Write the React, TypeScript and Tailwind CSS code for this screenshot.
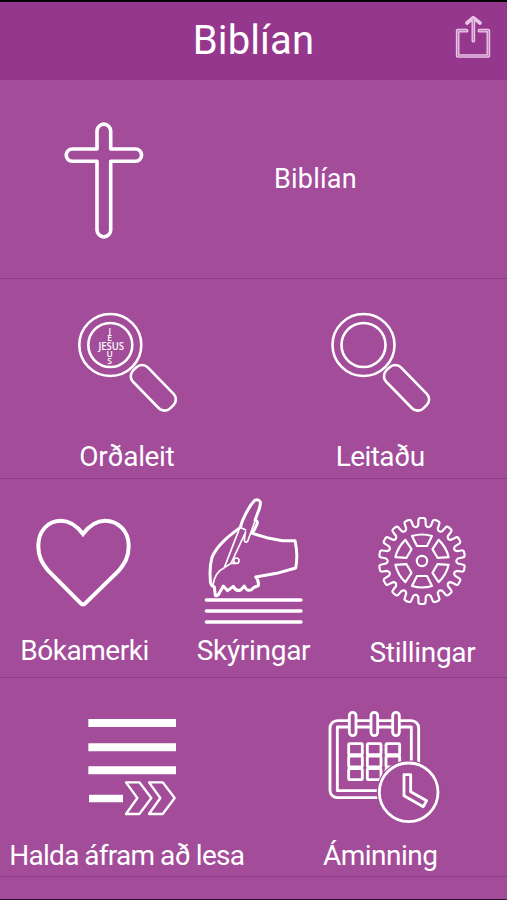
import type { ReactNode } from "react";

const BG = "#a24c9a";

const LABEL = "block h-10 text-[28px] leading-10 whitespace-pre";

type IconProps = { box: string; className: string; children: ReactNode };

function Icon({ box, className, children }: IconProps) {
  return (
    <svg viewBox={box} className={className} fill="none" stroke="#fff" strokeLinejoin="round" strokeLinecap="round">
      {children}
    </svg>
  );
}

function Magnifier() {
  return (
    <g strokeWidth="2.6">
      <circle cx="110.3" cy="345" r="31" />
      <circle cx="110.3" cy="345" r="22" />
      <rect x="126.8" y="377.5" width="53" height="20.6" rx="8" transform="rotate(45.7 153.3 387.8)" />
    </g>
  );
}

function gearPath(teeth: number) {
  const pts: string[] = [];
  const at = (r: number, deg: number) => {
    const a = (deg * Math.PI) / 180;
    return `${(171 + r * Math.sin(a)).toFixed(1)} ${(168 - r * Math.cos(a)).toFixed(1)}`;
  };
  const step = 360 / teeth;
  for (let i = 0; i < teeth; i++) {
    const c = i * step;
    pts.push(`${i === 0 ? "M" : "L"}${at(108, c - 6)}`);
    pts.push(`L${at(122, c - 5)} Q${at(129, c - 5)} ${at(129, c - 2)}`);
    pts.push(`L${at(129, c + 2)} Q${at(129, c + 5)} ${at(122, c + 5)}`);
    pts.push(`L${at(108, c + 6)} Q${at(98, c + step / 2)} ${at(108, c + step - 6)}`);
  }
  return pts.join(" ") + "Z";
}

const GEAR = gearPath(18);

export default function App() {
  return (
    <main className="flex h-[900px] w-[507px] flex-col overflow-hidden border-t-2 border-b border-t-black border-b-[#30102e] bg-[#a24c9a] font-[Roboto,sans-serif] text-white">
      <header className="grid h-[78px] shrink-0 grid-cols-[1fr_auto_1fr] items-start bg-[#95378d]">
        <span />
        <h1 className="pt-[15px] text-[40px] leading-[48px] tracking-[0.1px]">Biblían</h1>
        <button aria-label="Share" className="mt-[11px] mr-[15px] justify-self-end">
          <Icon box="1362 39 114 141" className="h-[47px] w-[38px]">
            <g stroke="#e8c6e5" strokeWidth="11">
              <path d="M1400 92H1373V168H1465V92H1438M1420 122V57M1401 69L1420 53L1440 69" />
            </g>
            <path d="M1400 92H1373V168H1465V92H1438M1420 122V57" stroke="#bd78b6" strokeWidth="3" />
          </Icon>
        </button>
      </header>

      <section className="grid h-[199px] shrink-0 grid-cols-[208px_1fr] border-b border-[#8e3b87]">
        <Icon box="0 80 208 198" className="h-[198px] w-[208px]">
          <path
            strokeWidth="3.6"
            d="M97 149V131a6.85 6.85 0 0 1 13.7 0V149H135.5a6 6 0 0 1 0 12.2H110.7V230a6.85 6.85 0 0 1-13.7 0V161.2H72.3a6 6 0 0 1 0-12.2Z"
          />
        </Icon>
        <span className="pt-[79px] pl-[66px] text-[27px] leading-10 tracking-[0.2px]">Biblían</span>
      </section>

      <section className="grid h-[200px] shrink-0 grid-cols-2 border-b border-[#8e3b87]">
        <div className="flex flex-col items-center">
          <Icon box="0 279 253 158" className="h-[158px] w-[253px]">
            <Magnifier />
            <g fill="#fff" stroke="none" fontFamily="Open Sans, sans-serif" fontWeight="600">
              <text x="98.5" y="349.5" fontSize="10" textLength="25.5" lengthAdjust="spacingAndGlyphs">JESUS</text>
              <g textAnchor="middle" fontSize="8.5">
                <text x="109.7" y="333.5">J</text>
                <text x="109.7" y="341.3">E</text>
                <text x="109.7" y="356.7">U</text>
                <text x="109.7" y="364">S</text>
              </g>
            </g>
          </Icon>
          <span className={`${LABEL} tracking-[-0.4px]`}>Orðaleit</span>
        </div>
        <div className="flex flex-col items-center">
          <Icon box="0.8 279 253 158" className="h-[158px] w-[253px]">
            <Magnifier />
          </Icon>
          <span className={`${LABEL} tracking-[-0.6px]`}>Leitaðu</span>
        </div>
      </section>

      <section className="grid h-[199px] shrink-0 grid-cols-3 border-b border-[#8e3b87]">
        <div className="flex flex-col items-center">
          <Icon box="0 479 169 152" className="h-[152px] w-[169px]">
            <path
              strokeWidth="4"
              strokeLinejoin="miter"
              d="M83 534C77 526 70 520.7 61 520.7C48 520.7 38.3 531 38.3 546C38.3 557 42 563 48.5 571L80.5 603Q83 606 85.5 603L118.5 571C125 563 128.7 557 128.7 546C128.7 531 118 520.7 105 520.7C96 520.7 89 526 83 534Z"
            />
          </Icon>
          <span className={`${LABEL} tracking-[-0.45px]`}>Bókamerki</span>
        </div>
        <div className="flex flex-col items-center">
          <Icon box="169 479 169 152" className="h-[152px] w-[169px]">
            <g transform="translate(195 490) scale(.33333)" strokeWidth="9">
              <path d="M136 112L143 91Q162 48 179 31Q190 26 196 36Q197 48 190 64L180 91Q189 91 186 103L172 130L215 143L262 152L300 152Q310 195 302 234L245 250L182 261Q192 270 190 287Q177 290 170 299Q155 306 148 288L137 300Q122 305 115 289L98 302L85 288L73 309Q69 319 61 317L58 291Q45 286 46 270Q43 230 51 202C66 165 105 135 136 112Z" />
              <g strokeWidth="5">
                <path d="M132 119L88 233L108 220L152 126M88 233Q60 246 54 284M108 220L121 220M151 126L148 150Q150 160 158 154L179 96M136 112L152 120" />
                <circle cx="124" cy="212" r="8" />
              </g>
              <path strokeWidth="10" d="M34 330H318M34 363H318M34 396H318" />
            </g>
          </Icon>
          <span className={`${LABEL} tracking-[-0.3px]`}>Skýringar</span>
        </div>
        <div className="flex flex-col items-center">
          <Icon box="338 479 169 152" className="mb-[2px] h-[152px] w-[169px]">
            <g transform="translate(365 505) scale(.33333)" strokeWidth="6.5">
              <path d={GEAR} />
              <circle cx="171" cy="168" r="15.5" />
              {[0, 60, 120, 180, 240, 300].map((a) => (
                <path key={a} transform={`rotate(${a} 171 168)`} d="M141 93Q171 84 201 93L186 123H156Z" />
              ))}
            </g>
          </Icon>
          <span className={`${LABEL} tracking-[-0.3px]`}>Stillingar</span>
        </div>
      </section>

      <section className="grid h-[199px] shrink-0 grid-cols-2 border-b border-[#8e3b87]">
        <div className="flex flex-col items-center">
          <Icon box="0 678 253 157" className="h-[157px] w-[253px]">
            <g transform="translate(80 705) scale(.33333)" strokeWidth="7">
              <path fill="#fff" stroke="none" d="M25 42H288V66H25ZM25 115H288V139H25ZM25 184H288V208H25ZM27 269H129V292H27Z" />
              <path d="M138 232H178L214 279L178 327H138L172 279ZM207 232H248L284 279L248 327H207L241 279Z" />
            </g>
          </Icon>
          <span className={`${LABEL} pt-px tracking-[-0.7px] [word-spacing:-0.7px]`}>Halda áfram að lesa</span>
        </div>
        <div className="flex flex-col items-center">
          <Icon box="253 678 254 157" className="h-[157px] w-[254px]">
            <g transform="translate(320 700) scale(.33333)" strokeWidth="8.5">
              <rect x="30" y="62" width="266" height="231" rx="22" />
              <rect x="52" y="81" width="222" height="191" />
              {[98, 163, 228].map((x) => (
                <rect key={x} x={x - 10} y="37" width="20" height="70" rx="10" fill={BG} />
              ))}
              {[131, 168, 206].map((y) =>
                [86, 142, 198].map((x) => <rect key={`${x}-${y}`} x={x} y={y} width="41" height="33" rx="3" />),
              )}
              <circle cx="266" cy="277" r="96" fill={BG} stroke="none" />
              <circle cx="266" cy="277" r="88" />
              <path d="M252 224H272V275L320 302L310 320L252 287Z" />
            </g>
          </Icon>
          <span className={`${LABEL} pt-px tracking-[-0.5px]`}>Áminning</span>
        </div>
      </section>
    </main>
  );
}
